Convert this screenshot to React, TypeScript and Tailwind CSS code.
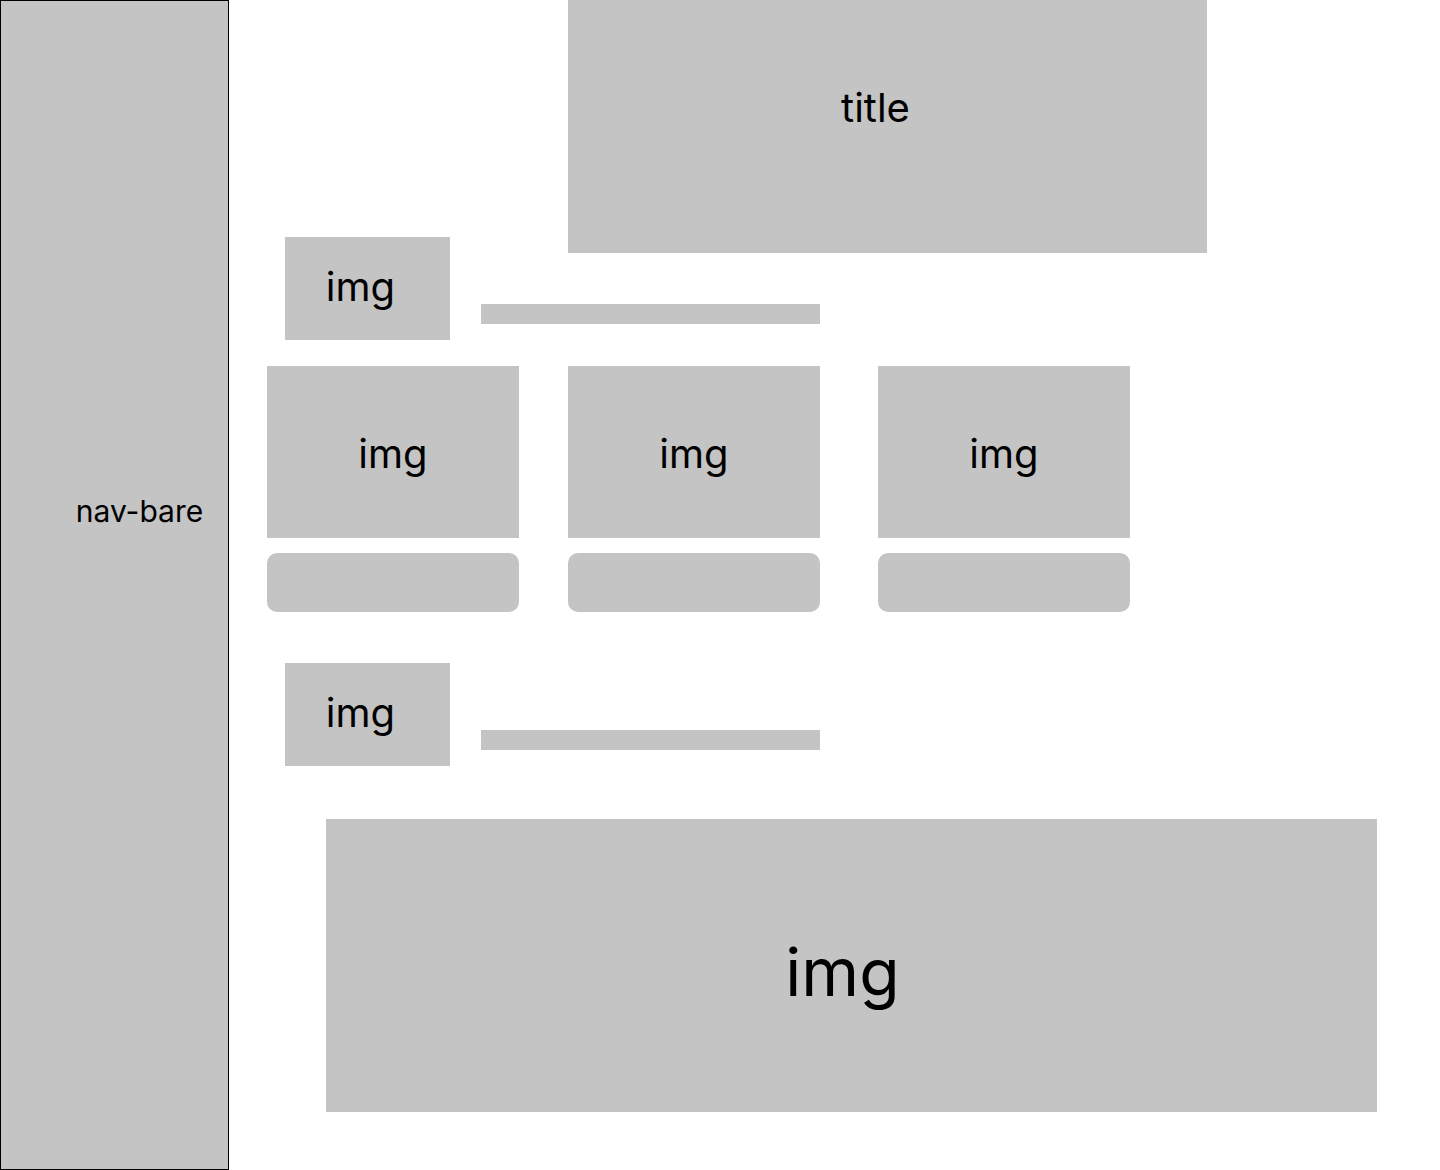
import React from "react";

const font = { fontFamily: "Inter, 'Noto Sans', sans-serif" };

function SmallRow() {
  return (
    <div className="flex items-start ml-[56px]">
      <div className="w-[165px] h-[103px] bg-[#c4c4c4] flex items-center justify-center pr-[14px] pb-[4px]">
        <span className="text-[40px] leading-[48px] text-black">img</span>
      </div>
      <div className="ml-[31px] mt-[67px] w-[339px] h-[20px] bg-[#c4c4c4]" />
    </div>
  );
}

function Card() {
  return (
    <div className="flex flex-col w-[252px]">
      <div className="h-[172px] bg-[#c4c4c4] flex items-center justify-center pt-[4px]">
        <span className="text-[40px] leading-[48px] text-black">img</span>
      </div>
      <div className="mt-[15px] h-[59px] rounded-[10px] bg-[#c4c4c4]" />
    </div>
  );
}

export default function App() {
  return (
    <div className="flex w-[1440px] h-[1170px] bg-white overflow-hidden" style={font}>
      <nav className="w-[229px] h-[1170px] shrink-0 bg-[#c4c4c4] border border-black flex justify-center pt-[490px] pl-[50px]">
        <span className="text-[30px] leading-[40px] text-black">nav-bare</span>
      </nav>
      <main className="flex flex-col flex-1">
        <div className="ml-[339px] w-[639px] h-[253px] bg-[#c4c4c4] flex justify-center pt-[84px] pr-[24px]">
          <span className="text-[40px] leading-[48px] text-black">title</span>
        </div>
        <div className="-mt-[16px]">
          <SmallRow />
        </div>
        <div className="flex mt-[26px] ml-[38px]">
          <Card />
          <div className="ml-[49px]">
            <Card />
          </div>
          <div className="ml-[58px]">
            <Card />
          </div>
        </div>
        <div className="mt-[51px]">
          <SmallRow />
        </div>
        <div className="mt-[53px] ml-[97px] w-[1051px] h-[293px] bg-[#c4c4c4] flex items-center justify-center pr-[18px]">
          <span className="text-[66px] leading-[80px] text-black mt-[12px]">img</span>
        </div>
      </main>
    </div>
  );
}
